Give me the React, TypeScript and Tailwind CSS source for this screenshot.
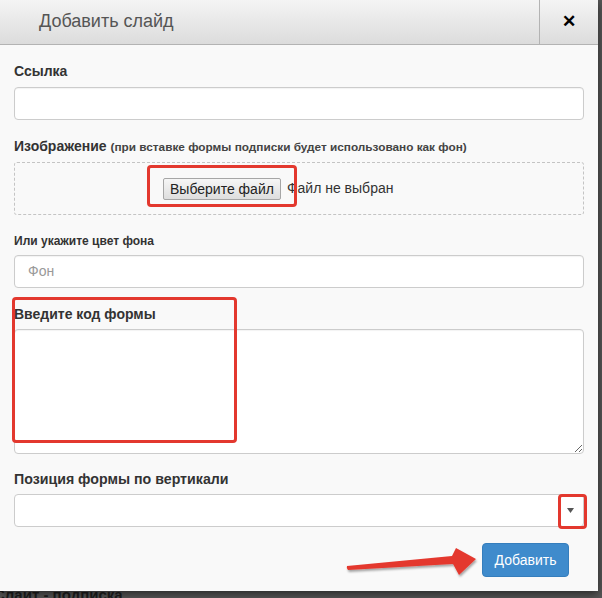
import React from 'react';

const font = "font-['Liberation_Sans',Arial,sans-serif]";

// Red annotation frame drawn over the dialog
const Mark: React.FC<{ className: string }> = ({ className }) => (
  <div className={`pointer-events-none absolute rounded-[4px] border-[3px] border-[#e3382e] ${className}`} />
);

const Label: React.FC<{ className?: string; children: React.ReactNode }> = ({ className = '', children }) => (
  <div className={`font-bold text-[#333] leading-[18px] ${className}`}>{children}</div>
);

export default function App() {
  return (
    <div className={`relative w-[602px] h-[598px] overflow-hidden bg-[#575757] ${font}`}>
      {/* dialog */}
      <div className="relative z-10 w-[598px] h-[591px] bg-[#f9f9f9] shadow-[0_3px_9px_rgba(0,0,0,0.55)]">
        <div className="flex h-[45px] border-b border-[#b3b3b3] bg-gradient-to-b from-[#f4f4f4] to-[#dcdcdc]">
          <div className="flex-1 pl-[39px] pt-[9px] text-[18px] leading-[24px] text-[#555]">Добавить слайд</div>
          <div className="flex w-[59px] items-center justify-center border-l border-[#b3b3b3] pb-[1px] text-[17px] font-bold text-black">
            ✕
          </div>
        </div>

        <div className="px-[14px] pt-[17px]">
          <Label className="text-[14px]">Ссылка</Label>
          <div className="mt-[7px] h-[33px] rounded-[4px] border border-[#ccc] bg-white shadow-[inset_0_1px_1px_rgba(0,0,0,0.05)]" />

          <Label className="mt-[17px] text-[14px]">
            Изображение <span className="text-[11.8px] font-bold text-[#444]">(при вставке формы подписки будет использовано как фон)</span>
          </Label>
          <div className="mt-[6px] flex h-[53px] items-center rounded-[3px] border border-dashed border-[#c4c4c4] pl-[148px]">
            <button className="h-[22px] rounded-[2px] border border-[#a6a6a6] bg-gradient-to-b from-[#f6f6f6] to-[#dedede] px-[6px] text-[14px] leading-[20px] text-[#222]">
              Выберите файл
            </button>
            <span className="ml-[6px] text-[14px] text-[#333]">Файл не выбран</span>
          </div>

          <Label className="mt-[17px] text-[12px]">Или укажите цвет фона</Label>
          <div className="mt-[5px] flex h-[33px] items-center rounded-[4px] border border-[#ccc] bg-white pl-[13px] text-[14px] text-[#999] shadow-[inset_0_1px_1px_rgba(0,0,0,0.05)]">
            Фон
          </div>

          <Label className="mt-[17px] text-[14px]">Введите код формы</Label>
          <textarea className="mt-[6px] block h-[125px] w-full rounded-[4px] border border-[#ccc] bg-white shadow-[inset_0_1px_1px_rgba(0,0,0,0.05)] outline-none" />

          <Label className="mt-[16px] text-[14.2px]">Позиция формы по вертикали</Label>
          <div className="mt-[6px] flex h-[33px] items-center justify-end rounded-[4px] border border-[#ccc] bg-white pr-[9px]">
            <svg width="7" height="5" viewBox="0 0 7 5">
              <path d="M0 0h7L3.5 5z" fill="#555" />
            </svg>
          </div>

          <div className="mt-[16px] flex justify-end pr-[15px]">
            <button className="h-[34px] w-[87px] rounded-[4px] border border-[#357ebd] bg-[#3f8bcc] text-[14px] text-white">
              Добавить
            </button>
          </div>
        </div>

        {/* annotations */}
        <Mark className="left-[147px] top-[165px] w-[150px] h-[42px]" />
        <Mark className="left-[12px] top-[297px] w-[225px] h-[146px]" />
        <Mark className="left-[558px] top-[494px] w-[29px] h-[35px]" />
        <svg className="pointer-events-none absolute left-0 top-0" width="598" height="591" viewBox="0 0 598 591">
          <defs>
            <filter id="sh" x="-10%" y="-50%" width="120%" height="200%">
              <feDropShadow dx="1" dy="2" stdDeviation="1.2" floodColor="#000" floodOpacity="0.35" />
            </filter>
          </defs>
          <path
            d="M347 566 Q346 568.5 348 570 L453 564 L459 575 L476 559 L456 548 L452 556 Z"
            fill="#e4392f"
            filter="url(#sh)"
          />
        </svg>
      </div>

      {/* page behind the dialog */}
      <div className="-mt-[5px] -ml-[6px] text-[15px] font-bold leading-[18px] text-[#1e1e1e]">Слайт - подписка</div>
    </div>
  );
}
